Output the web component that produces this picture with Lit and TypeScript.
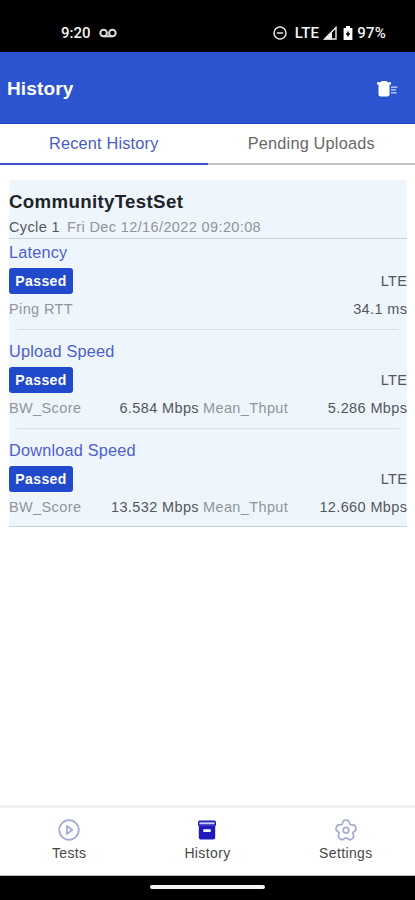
import { LitElement, html, css, svg } from "lit";
import { customElement } from "lit/decorators.js";

interface Metric { name: string; value: string; }
interface Result { title: string; metrics: Metric[]; }

const results: Result[] = [
  { title: "Latency", metrics: [{ name: "Ping RTT", value: "34.1 ms" }] },
  { title: "Upload Speed", metrics: [{ name: "BW_Score", value: "6.584 Mbps" }, { name: "Mean_Thput", value: "5.286 Mbps" }] },
  { title: "Download Speed", metrics: [{ name: "BW_Score", value: "13.532 Mbps" }, { name: "Mean_Thput", value: "12.660 Mbps" }] },
];

const playIcon = svg`<circle cx="12" cy="12" r="9.8"/><path d="M9.8 7.8v8.4l5.4-4.2z"/>`;
const gearIcon = svg`<path d="M9.4 2.8Q12 1.6 14.6 2.8L16.2 6.7 20.4 7.1Q22.5 9.2 22 12L18.8 14.7 19.8 18.8Q18.4 21.3 15.6 21.8L12 19.7 8.4 21.8Q5.6 21.3 4.2 18.8L5.2 14.7 2 12Q1.5 9.2 3.6 7.1L7.8 6.7z"/><circle cx="12" cy="12.2" r="2.8"/>`;

@customElement("app-root")
export class AppRoot extends LitElement {
  static styles = css`
    :host { display: flex; flex-direction: column; width: 415px; height: 900px; box-sizing: border-box; overflow: hidden; background: #fff; font: 14.5px "Liberation Sans", Arial, sans-serif; letter-spacing: .38px; color: #53575d; }
    * { box-sizing: border-box; }
    svg { display: block; flex: none; }
    .status { height: 52px; flex: none; background: #000; color: #f4f4f4; display: flex; align-items: center; padding: 13px 29px 0 61px; font: 500 15px Roboto, sans-serif; letter-spacing: 0; }
    .voicemail { margin-left: 8px; }
    .right { margin-left: auto; display: flex; align-items: center; letter-spacing: .2px; }
    .dnd { margin-right: 8px; }
    .signal { margin: 0 6px 0 4px; }
    .battery { margin-right: 4px; }
    .header { height: 72px; flex: none; background: #2b54ce; color: #fff; display: flex; align-items: center; justify-content: space-between; padding: 2px 17px 0 7px; border-bottom: 1px solid #2148c0; }
    .header h1 { margin: 0; font-size: 19px; letter-spacing: .15px; }
    .tabs { display: flex; height: 41px; flex: none; }
    .tab { flex: 1; text-align: center; font-size: 16.3px; line-height: 38px; letter-spacing: .2px; color: #686868; border-bottom: 2px solid #c3c3c3; }
    .tab.active { color: #485cc8; border-color: #3c55cc; }
    .card { margin: 15px 8px 0 9px; height: 347px; background: #eff5fc; border-bottom: 1px solid #cbd1d8; }
    .head { height: 59px; padding-top: 11px; border-bottom: 1px solid #cbd1d8; }
    .head h2 { margin: 0; font-size: 18.7px; line-height: 21px; letter-spacing: .33px; color: #202428; }
    .meta { display: flex; gap: 7px; line-height: 16px; margin-top: 7px; }
    .date, .name { color: #90959b; }
    .result { height: 90px; padding-top: 3px; }
    .result + .result { height: 99px; padding-top: 12px; position: relative; }
    .result + .result::before { content: ""; position: absolute; left: 8px; right: 8px; top: 0; height: 1px; background: #d5dce3; }
    .title { font-size: 16.3px; line-height: 20px; letter-spacing: .2px; color: #4b60cc; }
    .outcome { display: flex; justify-content: space-between; align-items: center; height: 26px; margin-top: 6px; }
    .badge { width: 64px; height: 26px; border-radius: 3px; background: #2149cc; color: #fff; font-size: 14px; font-weight: bold; line-height: 26px; text-align: center; }
    .metrics { display: flex; gap: 4px; line-height: 18px; margin-top: 6px; }
    .metric { display: flex; justify-content: space-between; flex: 0 0 190px; }
    .metric:last-child { flex: 1; }
    .metrics, .outcome { margin-right: -.4px; white-space: nowrap; }
    .nav { height: 71px; flex: none; margin-top: auto; border-top: 3px solid #f1f1f1; border-bottom: 1px solid #bbb; display: flex; font-size: 14px; }
    .item { flex: 1; display: flex; flex-direction: column; align-items: center; padding-top: 10px; color: #484848; }
    .item span { margin-top: 3px; line-height: 17px; }
    .line { fill: none; stroke: #a3acd0; stroke-width: 1.7; stroke-linejoin: round; }
    .gesture { height: 24px; flex: none; background: #000; display: flex; justify-content: center; padding-top: 9px; }
    .handle { width: 115px; height: 4px; border-radius: 2px; background: #f4f4f4; }
  `;

  render() {
    return html`
      <div class="status">
        <span>9:20</span>
        <svg class="voicemail" width="18" height="10" viewBox="0 0 18 10" fill="none" stroke="#ddd" stroke-width="2"><circle cx="4.6" cy="5" r="3.3"/><circle cx="13.4" cy="5" r="3.3"/><path d="M4.6 8.3h8.8"/></svg>
        <div class="right">
          <svg class="dnd" width="14" height="14" viewBox="0 0 14 14" fill="none" stroke="#e4e4e4" stroke-width="1.5"><circle cx="7" cy="7" r="6"/><path d="M3.8 7h6.4"/></svg>
          <span>LTE</span>
          <svg class="signal" width="14" height="14" viewBox="0 0 14 14"><path d="M1.6 13 13 1.5V13z" fill="none" stroke="#eee" stroke-width="1.4"/><path d="M1 13.5 9 5.5v8z" fill="#eee"/></svg>
          <svg class="battery" width="10" height="14" viewBox="0 0 10 14"><path d="M3 0h4v2h2.4v12H.6V2H3z" fill="#fff"/><path d="M5 5.5v5M3 8h4" stroke="#000" stroke-width="1.5"/></svg>
          <span>97%</span>
        </div>
      </div>
      <div class="header">
        <h1>History</h1>
        <svg width="21" height="16" viewBox="0 0 21 16" fill="#fff"><path d="M4.6 0h5l1 1.2H14v2.4H0V1.2h3.6z"/><path d="M1.5 3h11v10.5a2 2 0 0 1-2 2h-7a2 2 0 0 1-2-2z"/><path d="M14 5.4h6.4v1.3H14zM14 8.3h5v1.3h-5zM14 11.2h5.7v1.3H14z" opacity=".8"/></svg>
      </div>
      <div class="tabs"><div class="tab active">Recent History</div><div class="tab">Pending Uploads</div></div>
      <div class="card">
        <div class="head">
          <h2>CommunityTestSet</h2>
          <div class="meta"><span>Cycle 1</span><span class="date">Fri Dec 12/16/2022 09:20:08</span></div>
        </div>
        ${results.map((r) => html`
          <div class="result">
            <div class="title">${r.title}</div>
            <div class="outcome"><span class="badge">Passed</span><span>LTE</span></div>
            <div class="metrics">${r.metrics.map((m) => html`<div class="metric"><span class="name">${m.name}</span><span>${m.value}</span></div>`)}</div>
          </div>`)}
      </div>
      <div class="nav">
        <div class="item"><svg class="line" width="24" height="24" viewBox="0 0 24 24">${playIcon}</svg><span>Tests</span></div>
        <div class="item"><svg width="24" height="24" viewBox="0 0 24 24"><path d="M4 2.5h16l1 1.2v4H3v-4z" fill="#231fb0"/><path d="M4.4 4.3h15.2v2H4.4z" fill="#c9c8f4"/><path d="M3.8 7.5h16.4v12a2 2 0 0 1-2 2H5.8a2 2 0 0 1-2-2z" fill="#1f1abb"/><path d="M8.3 11.2h7.4v2.8H8.3z" fill="#fff"/></svg><span>History</span></div>
        <div class="item"><svg class="line" width="24" height="24" viewBox="0 0 24 24">${gearIcon}</svg><span>Settings</span></div>
      </div>
      <div class="gesture"><div class="handle"></div></div>
    `;
  }
}
